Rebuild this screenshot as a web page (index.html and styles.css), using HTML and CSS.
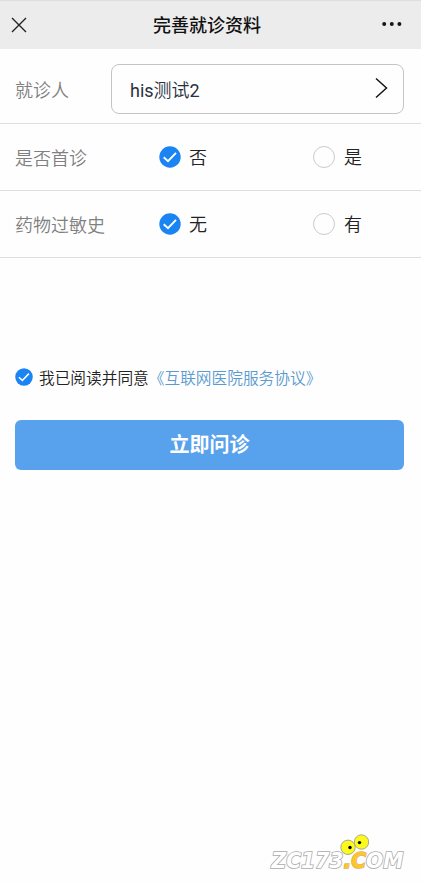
FILE: index.html
```html
<!DOCTYPE html>
<html lang="zh-CN">
<head>
<meta charset="utf-8">
<title>完善就诊资料</title>
<link rel="stylesheet" href="styles.css">
</head>
<body>
<header class="navbar">
  <svg class="close" viewBox="0 0 16 16"><path d="M1 1L15 15M15 1L1 15"/></svg>
  <h1 class="title">完善就诊资料</h1>
  <svg class="more" viewBox="0 0 20 6"><circle cx="2.2" cy="3" r="2"/><circle cx="9.8" cy="3" r="2"/><circle cx="17.4" cy="3" r="2"/></svg>
</header>
<main>
  <div class="row row-patient">
    <span class="label">就诊人</span>
    <div class="select">
      <span><span class="latin">his</span>测试<span class="latin">2</span></span>
      <svg class="chevron" viewBox="0 0 13 22"><path d="M1 1.5L11.5 11L1 20.5"/></svg>
    </div>
  </div>
  <div class="row">
    <span class="label">是否首诊</span>
    <div class="option"><svg class="check" viewBox="0 0 22 22"><circle cx="11" cy="11" r="10.7"/><path d="M4.7 11.3L9 15.2L17 6.9"/></svg><span>否</span></div>
    <div class="option"><i class="radio"></i><span>是</span></div>
  </div>
  <div class="row">
    <span class="label">药物过敏史</span>
    <div class="option"><svg class="check" viewBox="0 0 22 22"><circle cx="11" cy="11" r="10.7"/><path d="M4.7 11.3L9 15.2L17 6.9"/></svg><span>无</span></div>
    <div class="option"><i class="radio"></i><span>有</span></div>
  </div>
  <div class="agreement">
    <svg class="check check-small" viewBox="0 0 22 22"><circle cx="11" cy="11" r="10.7"/><path d="M4.7 11.3L9 15.2L17 6.9"/></svg>
    <span class="agree-text">我已阅读并同意</span><a class="link">《互联网医院服务协议》</a>
  </div>
  <button class="submit">立即问诊</button>
</main>
<svg class="watermark" viewBox="0 0 140 42">
  <g class="eyes"><circle cx="81" cy="17.3" r="7.2"/><circle cx="94.5" cy="12" r="7.2"/></g>
  <circle cx="83" cy="17.5" r="1.7"/><circle cx="92.5" cy="12.6" r="1.7"/>
  <text x="4.5" y="38" textLength="132" lengthAdjust="spacingAndGlyphs">ZC173<tspan class="accent">.C</tspan>OM</text>
</svg>
</body>
</html>
```
FILE: styles.css
```css
* { box-sizing: border-box; }
body {
  margin: 0;
  height: 883px;
  position: relative;
  overflow: hidden;
  background: #fefefe;
  color: #222;
  font-family: Roboto, "Noto Sans CJK SC", sans-serif;
  font-size: 18px;
  font-weight: 350;
}
svg { display: block; flex: none; }
.navbar {
  height: 49px;
  display: flex;
  align-items: center;
  justify-content: space-between;
  padding: 0 19px 0 11px;
  background: #ececec;
  border-top: 1px solid #dedede;
}
.close { width: 16px; height: 16px; margin-top: -1px; fill: none; stroke: #222; stroke-width: 1.4; }
.title { margin: 2px 0 0 5px; font-size: 18px; line-height: 26px; font-weight: 500; color: #111; }
.more { width: 20px; height: 6px; margin-top: -2px; fill: #161616; }
.row {
  height: 67px;
  display: flex;
  align-items: center;
  padding: 0 0 0 15px;
  border-bottom: 1px solid #dedede;
}
.row-patient { height: 75px; padding: 5px 17px 0 15px; }
.label { flex: none; width: 144px; color: #808080; }
.row-patient .label { width: 96px; }
.select {
  flex: 1;
  height: 50px;
  display: flex;
  align-items: center;
  justify-content: space-between;
  padding: 0 15px 0 18px;
  border: 1px solid #c4c4c4;
  border-radius: 8px;
  color: #28313c;
}
.latin { font-weight: 400; }
.chevron { width: 13px; height: 22px; margin-top: -2px; fill: none; stroke: #161616; stroke-width: 1.5; }
.option { width: 154px; display: flex; align-items: center; gap: 8px; flex: none; }
.option:last-child { width: auto; gap: 9px; }
.option span { padding-bottom: 2px; }
.check { width: 22px; height: 22px; }
.check circle { fill: #1984f2; }
.check path { fill: none; stroke: #fff; stroke-width: 1.9; }
.radio { width: 22px; height: 22px; border: 1px solid #ccc; border-radius: 50%; }
.agreement {
  display: flex;
  align-items: center;
  height: 24px;
  margin: 107px 15px 0;
  font-size: 15.7px;
}
.check-small { width: 18px; height: 18px; margin-right: 6px; }
.link { color: #5a9bd0; }
.submit {
  display: block;
  width: 389px;
  height: 50px;
  margin: 31px 0 0 15px;
  padding: 0 0 3px;
  border: 0;
  border-radius: 6px;
  background: #58a2ed;
  color: #fff;
  font: 700 20px Roboto, "Noto Sans CJK SC", sans-serif;
}
.watermark { position: absolute; left: 267px; top: 830px; width: 140px; height: 42px; }
.watermark text {
  font: italic bold 20.5px "DejaVu Sans", sans-serif;
  fill: #fff;
  stroke: #aaa;
  stroke-width: 1.6;
  paint-order: stroke;
}
.watermark .accent { fill: #ffc52b; stroke: #d9b768; }
.eyes { fill: #fcf91c; stroke: #a8a890; stroke-width: 1; }
```
